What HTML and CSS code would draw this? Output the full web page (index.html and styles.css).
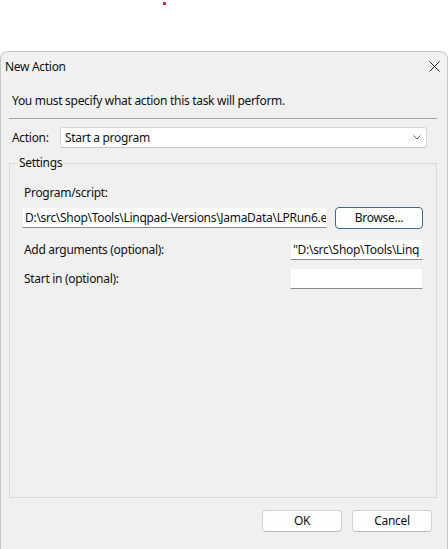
FILE: index.html
```html
<!DOCTYPE html>
<html>
<head>
<meta charset="utf-8">
<link rel="stylesheet" href="styles.css">
</head>
<body>
<div class="top"><span class="dot"></span></div>
<div class="window">
  <div class="titlebar">
    <span class="title">New Action</span>
    <svg class="close" width="11" height="11" viewBox="0 0 11 11"><path d="M0.5 0.5 L10.5 10.5 M10.5 0.5 L0.5 10.5" stroke="#1b1b1b" stroke-width="1" fill="none"/></svg>
  </div>
  <div class="intro">You must specify what action this task will perform.</div>
  <div class="action-row">
    <span class="action-label">Action:</span>
    <div class="select">
      <span>Start a program</span>
      <svg class="chevron" width="8" height="5" viewBox="0 0 8 5"><path d="M0.5 0.5 L4 4 L7.5 0.5" stroke="#5f5f5f" stroke-width="1" fill="none"/></svg>
    </div>
  </div>
  <fieldset class="settings">
    <legend>Settings</legend>
    <div class="settings-body">
      <div class="label">Program/script:</div>
      <div class="prog-row">
        <div class="field prog-field">D:\src\Shop\Tools\Linqpad-Versions\JamaData\LPRun6.e</div>
        <button class="btn browse">Browse...</button>
      </div>
      <div class="opt-row first">
        <span class="label">Add arguments (optional):</span>
        <div class="field opt-field">"D:\src\Shop\Tools\Linq</div>
      </div>
      <div class="opt-row">
        <span class="label">Start in (optional):</span>
        <div class="field opt-field"></div>
      </div>
    </div>
  </fieldset>
  <div class="buttons">
    <button class="btn">OK</button>
    <button class="btn">Cancel</button>
  </div>
</div>
</body>
</html>
```

FILE: styles.css
```css
html, body {
  margin: 0;
  padding: 0;
  background: #ffffff;
}
body {
  font-family: "Segoe UI", "Noto Sans", sans-serif;
  font-size: 12px;
  letter-spacing: -0.3px;
  color: #111;
  width: 448px;
  height: 549px;
  overflow: hidden;
}
.top {
  height: 51px;
  box-sizing: border-box;
  padding-top: 2px;
}
.dot {
  display: block;
  width: 3px;
  height: 3px;
  border-radius: 1px;
  background: #cc1f2f;
  margin-left: 163px;
}
.window {
  width: 448px;
  height: 498px;
  box-sizing: border-box;
  border: 1px solid #c6c6c6;
  border-bottom: none;
  border-radius: 8px 8px 0 0;
  background: #f0f0f0;
  display: flex;
  flex-direction: column;
}
.titlebar {
  height: 30px;
  display: flex;
  align-items: center;
  justify-content: space-between;
  padding: 0 7px 0 4px;
  background: #f1f1f1;
  border-radius: 8px 8px 0 0;
}
.title {
  line-height: 16px;
}
.close {
  display: block;
  margin-top: -2px;
}
.intro {
  margin: 0 10px 0 8px;
  padding: 11px 3px 9px;
  line-height: 16px;
  border-bottom: 1px solid #a3a3a3;
}
.action-row {
  display: flex;
  align-items: center;
  margin-top: 8px;
  padding-left: 11px;
}
.action-label {
  width: 48px;
  line-height: 16px;
}
.select {
  width: 367px;
  height: 21px;
  box-sizing: border-box;
  background: #ffffff;
  border: 1px solid #d6d6d6;
  border-bottom-color: #c4c4c4;
  border-radius: 3px;
  display: flex;
  align-items: center;
  justify-content: space-between;
  padding: 0 5px 0 4px;
  line-height: 16px;
}
.chevron {
  display: block;
}
.settings {
  flex: 1;
  margin: 7px 10px 0 8px;
  padding: 0;
  border: 1px solid #dadada;
  min-width: 0;
  display: block;
}
.settings legend {
  margin-left: 7px;
  padding: 0 2px;
  line-height: 16px;
}
.settings-body {
  padding: 14px 13px 0 12px;
}
.label {
  line-height: 16px;
  padding-left: 2px;
  white-space: nowrap;
}
.prog-row {
  display: flex;
  gap: 8px;
  margin-top: 6px;
}
.field {
  height: 21px;
  box-sizing: border-box;
  background: #ffffff;
  border: 1px solid #f0f0f0;
  border-bottom-color: #8a8a8a;
  border-radius: 2px 2px 0 0;
  padding: 0 1px 0 2px;
  line-height: 19px;
  white-space: nowrap;
  overflow: hidden;
}
.prog-field {
  width: 305px;
}
.opt-row {
  display: flex;
  align-items: center;
  justify-content: space-between;
  margin-top: 8px;
}
.opt-row.first {
  margin-top: 10px;
}
.opt-field {
  width: 133px;
}
.btn {
  font: inherit;
  letter-spacing: inherit;
  color: #111;
  width: 80px;
  height: 22px;
  box-sizing: border-box;
  background: #fdfdfd;
  border: 1px solid #d2d2d2;
  border-bottom-color: #bdbdbd;
  border-radius: 4px;
  padding: 0;
  line-height: 18px;
}
.browse {
  width: 88px;
  border: 1px solid #3e6a8e;
  box-shadow: inset 0 0 0 1px #ffffff;
}
.buttons {
  display: flex;
  justify-content: flex-end;
  gap: 10px;
  padding: 12px 15px 17px 0;
}
```
